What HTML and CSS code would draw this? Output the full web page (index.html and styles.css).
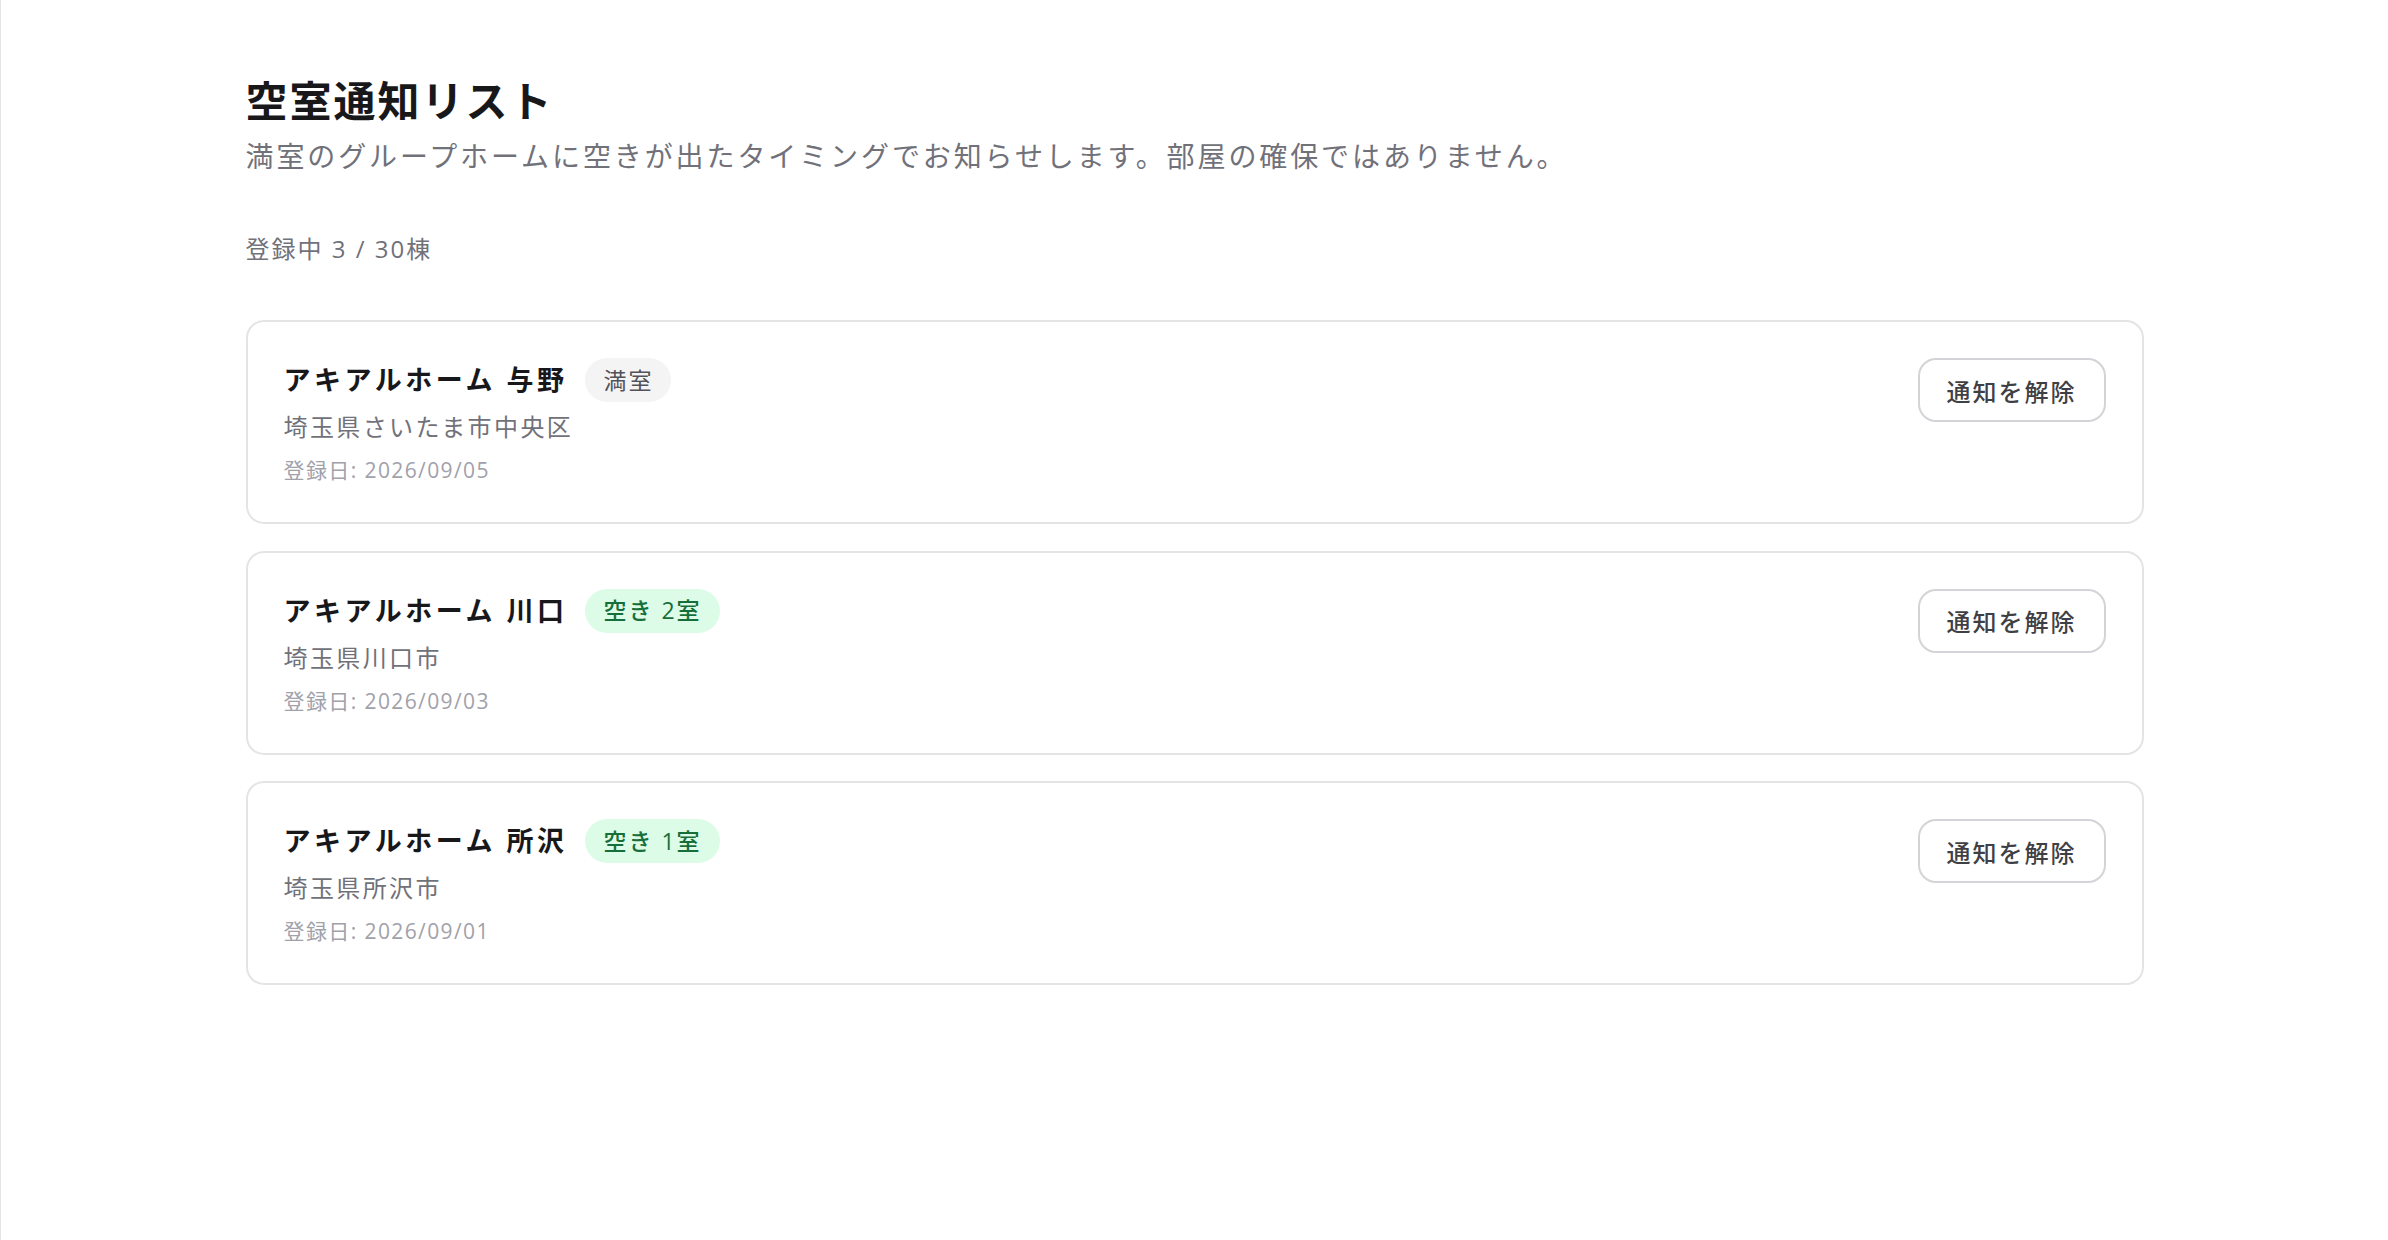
FILE: index.html
```html
<!DOCTYPE html>
<html lang="ja">
<head>
<meta charset="utf-8">
<title>空室通知リスト</title>
<link rel="stylesheet" href="styles.css">
</head>
<body>
<div class="page">
  <main class="container">
    <header class="page-head">
      <h1 class="title">空室通知リスト</h1>
      <p class="subtitle">満室のグループホームに空きが出たタイミングでお知らせします。部屋の確保ではありません。</p>
    </header>
    <p class="count">登録中 3 / 30棟</p>
    <ul class="list">
      <li class="card">
        <div class="card-body">
          <div class="card-head">
            <h2 class="name">アキアルホーム 与野</h2>
            <span class="badge badge-full">満室</span>
          </div>
          <p class="address">埼玉県さいたま市中央区</p>
          <p class="date">登録日: 2026/09/05</p>
        </div>
        <button class="btn" type="button">通知を解除</button>
      </li>
      <li class="card">
        <div class="card-body">
          <div class="card-head">
            <h2 class="name">アキアルホーム 川口</h2>
            <span class="badge badge-open">空き 2室</span>
          </div>
          <p class="address">埼玉県川口市</p>
          <p class="date">登録日: 2026/09/03</p>
        </div>
        <button class="btn" type="button">通知を解除</button>
      </li>
      <li class="card">
        <div class="card-body">
          <div class="card-head">
            <h2 class="name">アキアルホーム 所沢</h2>
            <span class="badge badge-open">空き 1室</span>
          </div>
          <p class="address">埼玉県所沢市</p>
          <p class="date">登録日: 2026/09/01</p>
        </div>
        <button class="btn" type="button">通知を解除</button>
      </li>
    </ul>
  </main>
</div>
</body>
</html>
```
FILE: styles.css
```css
* { box-sizing: border-box; }

html, body {
  margin: 0;
  padding: 0;
  background: #ffffff;
}

body {
  font-family: "Open Sans", "Noto Sans CJK JP", sans-serif;
  color: #18181b;
}

.page {
  min-height: 1240px;
  border-left: 1px solid #e4e4e7;
}

.container {
  width: 1898px;
  margin: 0 auto;
  padding-top: 74px;
}

.page-head {
  margin: 0;
}

.title {
  margin: 0;
  font-size: 42px;
  line-height: 54px;
  font-weight: 700;
  letter-spacing: 2px;
  color: #18181b;
}

.subtitle {
  margin: 8px 0 0;
  font-size: 28px;
  line-height: 40px;
  letter-spacing: 2.9px;
  color: #71717a;
}

.count {
  margin: 55px 0 0;
  font-size: 24px;
  line-height: 36px;
  letter-spacing: 2px;
  color: #71717a;
}

.list {
  list-style: none;
  margin: 53px 0 0;
  padding: 0;
  display: flex;
  flex-direction: column;
  gap: 26.5px;
}

.card {
  display: flex;
  justify-content: space-between;
  align-items: flex-start;
  padding: 36px;
  border: 2px solid #e4e4e7;
  border-radius: 18px;
  background: #fff;
}

.card-head {
  display: flex;
  align-items: center;
  gap: 18px;
  height: 44px;
  margin-bottom: 7px;
}

.name {
  margin: 0;
  font-size: 27px;
  line-height: 36px;
  font-weight: 700;
  letter-spacing: 3.5px;
  color: #18181b;
}

.badge {
  display: inline-flex;
  align-items: center;
  height: 44px;
  padding: 0 18px;
  border-radius: 22px;
  font-size: 23px;
  letter-spacing: 2px;
  line-height: 1;
}

.badge-full {
  background: #f4f4f5;
  color: #52525b;
}

.badge-open {
  background: #dcfce7;
  color: #166f3a;
  font-weight: 500;
}

.address {
  margin: 0;
  font-size: 24px;
  line-height: 36px;
  letter-spacing: 2.4px;
  color: #71717a;
}

.date {
  margin: 9px 0 0;
  font-size: 21px;
  line-height: 32px;
  letter-spacing: 1.4px;
  color: #a1a1aa;
}

.btn {
  margin-top: 0;
  width: 188px;
  height: 64px;
  padding: 0;
  border: 2px solid #d4d4d8;
  border-radius: 18px;
  background: #fff;
  font-family: inherit;
  font-size: 24px;
  font-weight: 500;
  letter-spacing: 2px;
  color: #3f3f46;
  cursor: pointer;
}
```
